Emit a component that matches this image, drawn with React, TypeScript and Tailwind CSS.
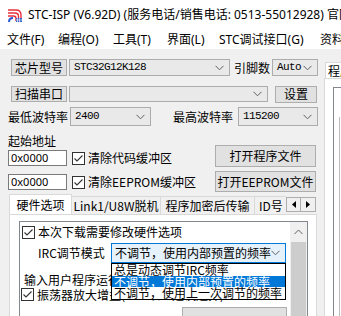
import React from 'react';

const ui = "font-['Segoe_UI','Noto_Sans','Noto_Sans_CJK_SC',sans-serif]";
const cjk = "font-['Noto_Sans_CJK_SC','Noto_Sans',sans-serif]";
const mono = "font-['Liberation_Mono','Noto_Sans_CJK_SC',monospace]";

function Chevron() {
  return (
    <svg width="9" height="6" viewBox="0 0 9 6" className="shrink-0">
      <path d="M0.5 0.8 L4.5 4.8 L8.5 0.8" fill="none" stroke="#606060" strokeWidth="1" />
    </svg>
  );
}

function CheckBox() {
  return (
    <div className="w-[13px] h-[13px] border border-[#333333] bg-white flex items-center justify-center shrink-0">
      <svg width="11" height="11" viewBox="0 0 11 11">
        <path d="M1.5 5.5 L4 8 L9.5 2.5" fill="none" stroke="#333333" strokeWidth="1.1" />
      </svg>
    </div>
  );
}

function Button({ w, h, children }: { w: string; h: string; children: React.ReactNode }) {
  return (
    <div className={`${w} ${h} ${cjk} shrink-0 bg-[#e1e1e1] border border-[#adadad] flex items-center justify-center text-[12px] leading-none text-black`}>
      {children}
    </div>
  );
}

function Select({ w, h, value }: { w: string; h: string; value?: string }) {
  return (
    <div className={`${w} ${h} shrink-0 bg-[#e9e9e9] border border-[#acacac] flex items-center justify-between pl-[4px] pr-[5px]`}>
      <span className={`${mono} text-[11px] leading-none tracking-[-0.6px] text-black`}>{value}</span>
      <Chevron />
    </div>
  );
}

function Logo() {
  return (
    <svg width="16" height="16" viewBox="0 0 16 16" className="shrink-0">
      <path d="M1 3 H9 Q14 3 14 8 V14" fill="none" stroke="#e8303c" strokeWidth="1.4" />
      <path d="M1 6 H8 Q11.5 6 11.5 9.5 V14" fill="none" stroke="#e8303c" strokeWidth="1.4" />
      <path d="M1 9 H6.5 Q9 9 9 11.5 V14" fill="none" stroke="#e8303c" strokeWidth="1.4" />
      <path d="M2 15 Q2 11 6 11" fill="none" stroke="#2a5bd7" strokeWidth="2" />
      <rect x="9" y="11" width="6" height="4" fill="#3b63c9" />
      <path d="M10.5 11 V15 M12.5 11 V15 M9 13 H15" stroke="#ffffff" strokeWidth="0.6" />
    </svg>
  );
}

export default function App() {
  return (
    <div className={`w-[341px] h-[316px] overflow-hidden bg-[#f0f0f0] flex flex-col text-black ${cjk}`}>
      {/* title bar */}
      <div className="h-[30px] bg-white flex items-center pl-[7px] gap-[5px] shrink-0 overflow-hidden">
        <Logo />
        <span className={`${ui} text-[12px] whitespace-nowrap`}>
          STC-ISP (V6.92D) (服务电话/销售电话: 0513-55012928) 官网
        </span>
      </div>

      {/* menu */}
      <div className={`h-[19px] bg-white flex items-center pl-[7px] shrink-0 text-[12px] whitespace-nowrap overflow-hidden ${ui}`}>
        <span className="w-[51px] shrink-0">文件(F)</span>
        <span className="w-[55px] shrink-0">编程(O)</span>
        <span className="w-[54px] shrink-0">工具(T)</span>
        <span className="w-[52px] shrink-0">界面(L)</span>
        <span className="w-[101px] shrink-0">STC调试接口(G)</span>
        <span className="shrink-0">资料(H)</span>
      </div>

      <div className="flex flex-1 min-h-0">
        {/* left column */}
        <div className="w-[324px] shrink-0 flex flex-col">
          <div className="flex items-center pl-[11px] mt-[10px] h-[17px]">
            <Button w="w-[56px]" h="h-[17px]">芯片型号</Button>
            <div className="ml-[2px]"><Select w="w-[161px]" h="h-[17px]" value="STC32G12K128" /></div>
            <span className="ml-[4px] text-[12px] leading-none">引脚数</span>
            <div className="ml-[2px]"><Select w="w-[46px]" h="h-[17px]" value="Auto" /></div>
          </div>

          <div className="flex items-center pl-[11px] mt-[10px] h-[16px]">
            <Button w="w-[56px]" h="h-[16px]">扫描串口</Button>
            <div className="ml-[2px]"><Select w="w-[199px]" h="h-[16px]" /></div>
            <div className="ml-[7px]"><Button w="w-[42px]" h="h-[17px]">设置</Button></div>
          </div>

          <div className="flex items-center pl-[8px] mt-[5px] h-[20px]">
            <span className="w-[62px] text-[12px] leading-none">最低波特率</span>
            <Select w="w-[81px]" h="h-[19px]" value="2400" />
            <span className="ml-[22px] w-[65px] text-[12px] leading-none">最高波特率</span>
            <Select w="w-[80px]" h="h-[19px]" value="115200" />
          </div>

          {/* address + open file */}
          <div className="flex pl-[8px] mt-[7px]">
            <div className="w-[207px] flex flex-col">
              <div className="h-[16px] text-[12px] leading-[16px]">起始地址</div>
              <div className="flex items-center mt-[1px] h-[16px]">
                <div className={`w-[59px] h-[16px] bg-white border border-[#7a7a7a] text-[11px] leading-[14px] pl-[2px] ${ui}`}>0x0000</div>
                <div className="ml-[5px]"><CheckBox /></div>
                <span className="ml-[3px] text-[12px] leading-none">清除代码缓冲区</span>
              </div>
              <div className="flex items-center mt-[8px] h-[16px]">
                <div className={`w-[59px] h-[16px] bg-white border border-[#7a7a7a] text-[11px] leading-[14px] pl-[2px] ${ui}`}>0x0000</div>
                <div className="ml-[5px]"><CheckBox /></div>
                <span className="ml-[3px] text-[12px] leading-none">清除EEPROM缓冲区</span>
              </div>
            </div>
            <div className="flex flex-col">
              <div className="mt-[12px]"><Button w="w-[101px]" h="h-[22px]">打开程序文件</Button></div>
              <div className="mt-[4px]"><Button w="w-[101px]" h="h-[21px]">打开EEPROM文件</Button></div>
            </div>
          </div>

          {/* tabs */}
          <div className="flex items-end pl-[9px] mt-[2px] h-[20px] text-[12px] leading-none">
            <div className="w-[63px] h-[20px] bg-white border border-b-0 border-[#d9d9d9] flex items-center justify-center">硬件选项</div>
            <div className="w-[89px] h-[18px] border-t border-r border-[#d9d9d9] flex items-center justify-center whitespace-nowrap">Link1/U8W脱机</div>
            <div className="w-[94px] h-[18px] border-t border-r border-[#d9d9d9] flex items-center justify-center whitespace-nowrap">程序加密后传输</div>
            <div className="w-[31px] h-[18px] border-t border-[#d9d9d9] overflow-hidden flex items-center pl-[4px] whitespace-nowrap">ID号</div>
            <div className="self-start mt-[3px] flex">
              <div className="w-[15px] h-[15px] border border-[#adadad] bg-[#f0f0f0] flex items-center justify-center">
                <svg width="4" height="7" viewBox="0 0 4 7"><path d="M4 0 L0 3.5 L4 7 Z" fill="#000" /></svg>
              </div>
              <div className="w-[15px] h-[15px] border border-l-0 border-[#adadad] bg-[#f0f0f0] flex items-center justify-center">
                <svg width="4" height="7" viewBox="0 0 4 7"><path d="M0 0 L4 3.5 L0 7 Z" fill="#000" /></svg>
              </div>
            </div>
          </div>

          {/* tab panel */}
          <div className="ml-[9px] w-[308px] flex-1 bg-white border border-b-0 border-[#d9d9d9] pl-[9px] pt-[6px]">
            <div className="w-[289px] h-[120px] border border-[#828790] border-b-0 flex">
              <div className="flex-1 flex flex-col relative text-[12px] leading-none">
                <div className="flex items-center pl-[2px] mt-[3px] h-[14px]">
                  <CheckBox />
                  <span className="ml-[3px]">本次下载需要修改硬件选项</span>
                </div>
                <div className="flex items-center mt-[4px] h-[20px] pl-[18px]">
                  <span className="w-[73px] whitespace-nowrap">IRC调节模式</span>
                  <div className="relative">
                    <div className="w-[175px] h-[20px] bg-[#e5f1fb] border border-[#0078d7] flex items-center justify-between pl-[3px] pr-[6px]">
                      <span className="whitespace-nowrap">不调节，使用内部预置的频率</span>
                      <Chevron />
                    </div>
                    {/* open dropdown list */}
                    <div className="absolute top-full left-0 z-10 w-[175px] bg-white border border-black flex flex-col whitespace-nowrap">
                      <div className="h-[12px] leading-[12px] pl-[2px]">总是动态调节IRC频率</div>
                      <div className="h-[11px] leading-[11px] pl-[2px] bg-[#0078d7] text-white">不调节，使用内部预置的频率</div>
                      <div className="h-[12px] leading-[12px] pl-[2px]">不调节，使用上一次调节的频率</div>
                    </div>
                  </div>
                </div>
                <div className="pl-[4px] mt-[11px] h-[13px] whitespace-nowrap">输入用户程序运行时的IRC频率</div>
                <div className="flex items-center pl-[1px] mt-[1px] h-[13px]">
                  <CheckBox />
                  <span className="ml-[3px] whitespace-nowrap">振荡器放大增益(12M以上建议选择)</span>
                </div>
                <div className="ml-[162px] mt-[6px] w-[105px] h-[20px] bg-[#e1e1e1] border border-[#adadad]" />
              </div>
              {/* scrollbar */}
              <div className="w-[17px] bg-[#f0f0f0] flex flex-col items-center">
                <div className="h-[20px] flex items-center justify-center">
                  <svg width="9" height="6" viewBox="0 0 9 6"><path d="M0.5 5 L4.5 1 L8.5 5" fill="none" stroke="#606060" strokeWidth="1" /></svg>
                </div>
                <div className="w-[15px] flex-1 bg-[#cdcdcd]" />
              </div>
            </div>
          </div>
        </div>

        {/* right panel (cut off) */}
        <div className="flex-1 flex flex-col pt-[13px]">
          <div className="ml-[1px] h-[16px] bg-white border border-b-0 border-[#d9d9d9] text-[12px] leading-[16px] pl-[2px] whitespace-nowrap overflow-hidden">程序文件</div>
          <div className="flex-1 bg-white border-l border-t border-[#d9d9d9] pl-[8px] pt-[8px]">
            <div className="h-full border-l border-t border-[#828790] pl-[5px] pt-[29px]">
              <div className="h-full border-l border-[#bcbcbc]" />
            </div>
          </div>
        </div>
      </div>
    </div>
  );
}
